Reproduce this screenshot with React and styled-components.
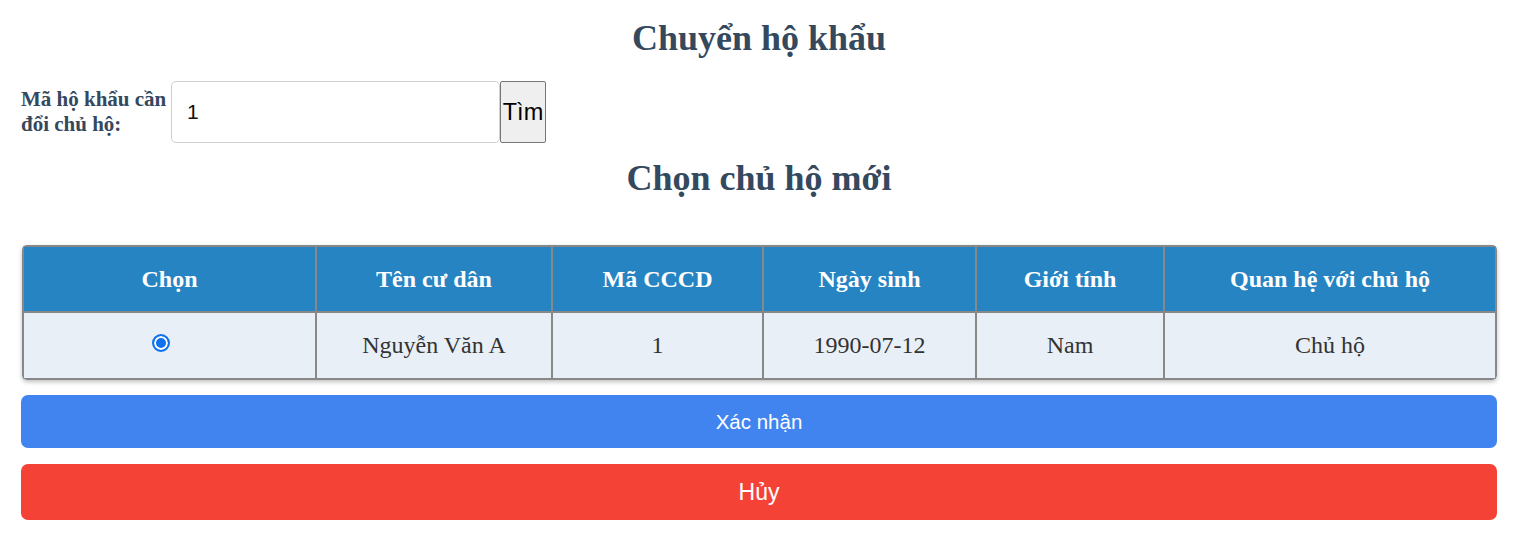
import React, { useState } from 'react';
import styled, { createGlobalStyle } from 'styled-components';

const GlobalStyle = createGlobalStyle`
  html, body {
    margin: 0;
    padding: 0;
    background: #ffffff;
  }
  body {
    font-family: "Liberation Serif", "Times New Roman", serif;
  }
`;

const Page = styled.div`
  padding: 0 22px 0 21px;
  display: flex;
  flex-direction: column;
`;

const Title = styled.h2`
  margin: 17px 0 0;
  text-align: center;
  font-family: "Liberation Serif", serif;
  font-size: 36px;
  font-weight: bold;
  line-height: 42px;
  color: #34495e;
`;

const SearchRow = styled.div`
  display: flex;
  align-items: center;
  margin-top: 22px;
`;

const Label = styled.label`
  width: 150px;
  font-family: "Liberation Serif", serif;
  font-size: 21px;
  font-weight: bold;
  line-height: 25px;
  color: #34495e;
`;

const Input = styled.input`
  box-sizing: border-box;
  width: 329px;
  height: 62px;
  padding: 0 15px;
  border: 1px solid #cfcfcf;
  border-radius: 5px;
  font-family: "Liberation Sans", Arial, sans-serif;
  font-size: 21px;
  color: #111;
  outline: none;
`;

const SearchButton = styled.button`
  box-sizing: border-box;
  width: 46px;
  height: 62px;
  padding: 0;
  border: 1px solid #767676;
  border-radius: 2px;
  background: #efefef;
  font-family: "Liberation Sans", Arial, sans-serif;
  font-size: 23.5px;
  color: #000;
`;

const SubTitle = styled(Title)`
  margin-top: 14px;
`;

const TableWrap = styled.div`
  margin-top: 46px;
  margin-left: 1px;
  border-radius: 5px;
  overflow: hidden;
  box-shadow: 0 2px 4px rgba(0, 0, 0, 0.25);
`;

const Table = styled.table`
  width: 100%;
  border-collapse: collapse;
  table-layout: fixed;
  border: 2px solid #888;
`;

const Th = styled.th`
  width: ${p => (p.w ? `${p.w}px` : 'auto')};
  height: 64px;
  padding: 0;
  background: #2784c2;
  color: #ffffff;
  font-family: "Liberation Serif", serif;
  font-size: 24px;
  font-weight: bold;
  border: 2px solid #888;
  text-align: center;
`;

const Td = styled.td`
  height: 65px;
  padding: 0;
  background: #e9eff6;
  color: #333;
  font-family: "Liberation Serif", serif;
  font-size: 24px;
  border: 2px solid #888;
  text-align: center;
`;

const Radio = styled.input`
  appearance: none;
  box-sizing: border-box;
  width: 18px;
  height: 18px;
  margin: 0 18px 7px 0;
  vertical-align: middle;
  border-radius: 50%;
  border: 2px solid #1172f0;
  background: #ffffff;
  &:checked {
    background: #1172f0;
    box-shadow: inset 0 0 0 2px #ffffff;
  }
`;

const ActionButton = styled.button`
  box-sizing: border-box;
  width: 100%;
  height: ${p => p.h}px;
  margin-top: ${p => p.mt}px;
  border: none;
  border-radius: 7px;
  background: ${p => p.bg};
  color: #ffffff;
  font-family: "Liberation Sans", Arial, sans-serif;
  font-size: ${p => p.fs}px;
`;

const columns = [
  { label: 'Chọn', w: 291 },
  { label: 'Tên cư dân', w: 234 },
  { label: 'Mã CCCD', w: 209 },
  { label: 'Ngày sinh', w: 211 },
  { label: 'Giới tính', w: 186 },
  { label: 'Quan hệ với chủ hộ' },
];

const residents = [
  { id: 1, name: 'Nguyễn Văn A', cccd: '1', dob: '1990-07-12', gender: 'Nam', relation: 'Chủ hộ' },
];

const App = () => {
  const [code, setCode] = useState('1');
  const [selected, setSelected] = useState(1);

  return (
    <Page>
      <GlobalStyle />
      <Title>Chuyển hộ khẩu</Title>
      <SearchRow>
        <Label>Mã hộ khẩu cần đổi chủ hộ:</Label>
        <Input value={code} onChange={e => setCode(e.target.value)} />
        <SearchButton>Tìm</SearchButton>
      </SearchRow>
      <SubTitle>Chọn chủ hộ mới</SubTitle>
      <TableWrap>
        <Table>
          <thead>
            <tr>
              {columns.map(c => (
                <Th key={c.label} w={c.w}>{c.label}</Th>
              ))}
            </tr>
          </thead>
          <tbody>
            {residents.map(r => (
              <tr key={r.id}>
                <Td>
                  <Radio
                    type="radio"
                    name="chuho"
                    checked={selected === r.id}
                    onChange={() => setSelected(r.id)}
                  />
                </Td>
                <Td>{r.name}</Td>
                <Td>{r.cccd}</Td>
                <Td>{r.dob}</Td>
                <Td>{r.gender}</Td>
                <Td>{r.relation}</Td>
              </tr>
            ))}
          </tbody>
        </Table>
      </TableWrap>
      <ActionButton bg="#4184f0" h={53} mt={15} fs={20.5}>Xác nhận</ActionButton>
      <ActionButton bg="#f44336" h={56} mt={16} fs={23}>Hủy</ActionButton>
    </Page>
  );
};

export default App;
